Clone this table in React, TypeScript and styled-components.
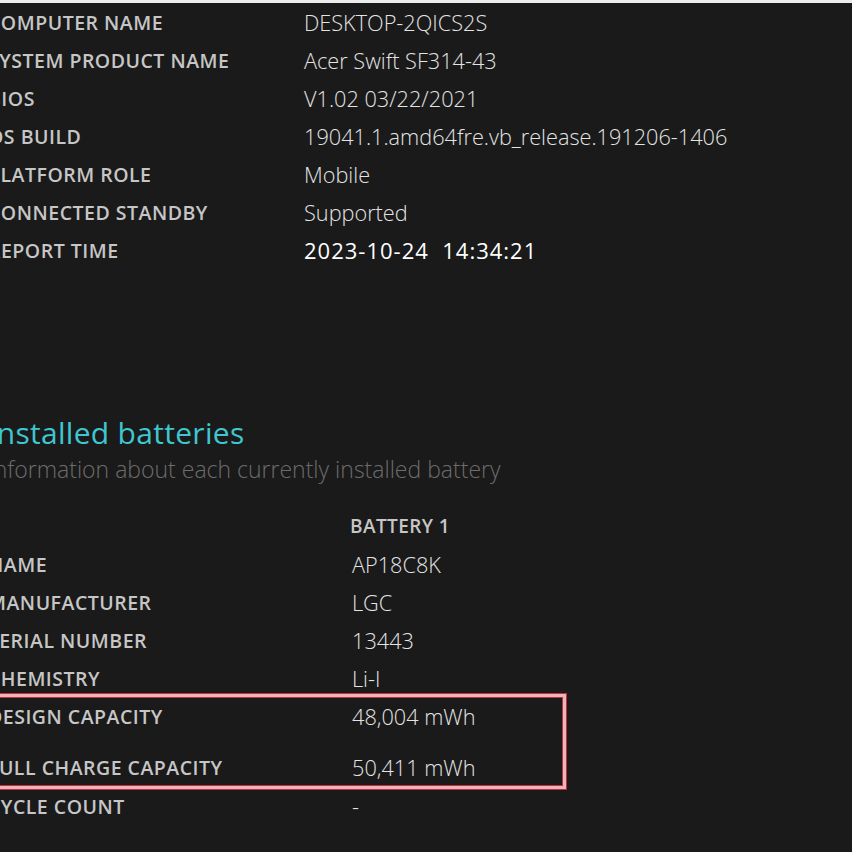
import React from 'react';
import styled, { createGlobalStyle } from 'styled-components';

const GlobalStyle = createGlobalStyle`
  html, body {
    margin: 0;
    padding: 0;
    background: #1a1a1a;
    overflow: hidden;
  }
`;

const systemInfo = [
  { label: 'Computer name', value: 'DESKTOP-2QICS2S' },
  { label: 'System product name', value: 'Acer Swift SF314-43' },
  { label: 'BIOS', value: 'V1.02 03/22/2021' },
  { label: 'OS build', value: '19041.1.amd64fre.vb_release.191206-1406' },
  { label: 'Platform role', value: 'Mobile' },
  { label: 'Connected standby', value: 'Supported' },
  { label: 'Report time', value: '2023-10-24  14:34:21', strong: true },
];

const App: React.FC = () => {
  return (
    <>
      <GlobalStyle />
      <TopStrip />
      <Page>
        <Table>
          {systemInfo.map((r) => (
            <Row key={r.label} $labelWidth={316}>
              <Label>{r.label}</Label>
              <Value $strong={r.strong}>{r.value}</Value>
            </Row>
          ))}
        </Table>

        <Heading>Installed batteries</Heading>
        <Subtitle>Information about each currently installed battery</Subtitle>

        <Table>
          <Row $labelWidth={362}>
            <span />
            <ColumnHead>Battery 1</ColumnHead>
          </Row>
          <Row $labelWidth={364}>
            <Label>Name</Label>
            <Value>AP18C8K</Value>
          </Row>
          <Row $labelWidth={364}>
            <Label>Manufacturer</Label>
            <Value>LGC</Value>
          </Row>
          <Row $labelWidth={364}>
            <Label>Serial number</Label>
            <Value>13443</Value>
          </Row>
          <Row $labelWidth={364}>
            <Label>Chemistry</Label>
            <Value>Li-I</Value>
          </Row>
          <Highlight>
            <Row $labelWidth={364}>
              <Label>Design capacity</Label>
              <Value>48,004 mWh</Value>
            </Row>
            <Row $labelWidth={364}>
              <Label>Full charge capacity</Label>
              <Value>50,411 mWh</Value>
            </Row>
          </Highlight>
          <Row $labelWidth={364}>
            <Label>Cycle count</Label>
            <Value>-</Value>
          </Row>
        </Table>
      </Page>
    </>
  );
};

export default App;

const TopStrip = styled.div`
  height: 3px;
  background: #ececec;
`;

const Page = styled.div`
  margin-left: -12px;
  font-family: 'Open Sans', 'Noto Sans', sans-serif;
`;

const Table = styled.div`
  display: flex;
  flex-direction: column;
`;

const Row = styled.div<{ $labelWidth: number }>`
  display: grid;
  grid-template-columns: ${(p) => p.$labelWidth}px 1fr;
  align-items: center;
  height: 38px;
`;

const Label = styled.div`
  font-size: 19.5px;
  font-weight: 600;
  text-transform: uppercase;
  color: #c6c6c6;
  letter-spacing: 0.5px;
  white-space: nowrap;
`;

const Value = styled.div<{ $strong?: boolean }>`
  font-size: ${(p) => (p.$strong ? '22px' : '21.7px')};
  font-weight: ${(p) => (p.$strong ? 500 : 300)};
  color: ${(p) => (p.$strong ? '#ffffff' : '#e4e4e4')};
  letter-spacing: ${(p) => (p.$strong ? '1px' : '0')};
  white-space: pre;
`;

const ColumnHead = styled.div`
  font-size: 19px;
  font-weight: 600;
  text-transform: uppercase;
  color: #c6c6c6;
  letter-spacing: 0.4px;
`;

const Heading = styled.h2`
  margin: 146px 0 0 0;
  font-size: 30px;
  font-weight: 400;
  color: #3fc6d0;
  line-height: 36px;
  letter-spacing: 0.3px;
`;

const Subtitle = styled.div`
  margin: 0 0 20px 0;
  font-size: 23px;
  font-weight: 300;
  color: #6c6c6c;
  line-height: 36px;
`;

const Highlight = styled.div`
  display: flex;
  flex-direction: column;
  gap: 13px;
  width: 575px;
  margin: -3px 0 -2px -3px;
  border: 3px solid #eeb4b8;
  box-shadow: 0 0 0 1px #b83444, inset 0 0 0 1px #b83444;
`;
